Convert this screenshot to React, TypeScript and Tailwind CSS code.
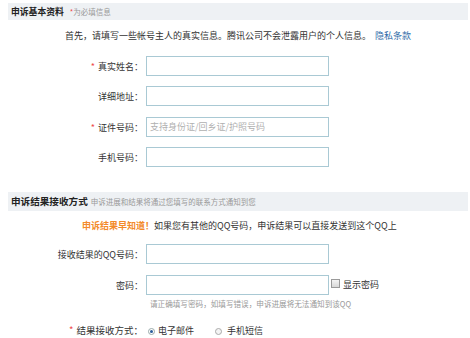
import React from "react";

const font = { fontFamily: '"Noto Sans CJK SC", "Noto Sans", sans-serif' };

function Star() {
  return <span className="text-[#ee4a4a] mr-[3px]">*</span>;
}

function Row({
  label,
  required,
  placeholder,
  mt,
  children,
}: {
  label: string;
  required?: boolean;
  placeholder?: string;
  mt: string;
  children?: React.ReactNode;
}) {
  return (
    <div className={`flex items-center h-[20px] ${mt}`}>
      <div className="w-[135px] text-right text-[9px] text-[#333] leading-none">
        {required && <Star />}
        {label}
      </div>
      <div className="ml-[3px] w-[183px] h-[20px] border border-[#a9c9d4] bg-white flex items-center pl-[3px] text-[9px] text-[#b0b0b0]">
        {placeholder}
      </div>
      {children}
    </div>
  );
}

export default function App() {
  return (
    <div className="w-[470px] h-[338px] bg-white pl-[8px] pr-[2px] pt-[3px] overflow-hidden" style={font}>
      <div className="flex items-center bg-[#eef1f4] pl-[3px] h-[17px]">
        <span className="font-bold text-[8.8px] text-[#222]">申诉基本资料</span>
        <span className="ml-[6px] text-[7.5px] text-[#999]">
          <span className="text-[#ee4a4a]">*</span>为必填信息
        </span>
      </div>

      <div className="mt-[10px] h-[12px] pl-[57px] text-[9px] leading-[12px] text-[#333] whitespace-nowrap">
        首先，请填写一些帐号主人的真实信息。腾讯公司不会泄露用户的个人信息。
        <span className="ml-[4px] text-[#2e6ba8]">隐私条款</span>
      </div>

      <Row label="真实姓名：" required mt="mt-[14px]" />
      <Row label="详细地址：" mt="mt-[10px]" />
      <Row label="证件号码：" required placeholder="支持身份证/回乡证/护照号码" mt="mt-[11px]" />
      <Row label="手机号码：" mt="mt-[10px]" />

      <div className="flex items-center bg-[#eef1f4] pl-[3px] h-[19px] mt-[25px]">
        <span className="font-bold text-[9.6px] text-[#222]">申诉结果接收方式</span>
        <span className="ml-[3px] text-[7.5px] text-[#999]">申诉进展和结果将通过您填写的联系方式通知到您</span>
      </div>

      <div className="mt-[9px] h-[12px] pl-[74px] text-[9px] leading-[12px] text-[#333] whitespace-nowrap">
        <span className="font-bold text-[#f38a2a]">申诉结果早知道！</span>
        如果您有其他的QQ号码，申诉结果可以直接发送到这个QQ上
      </div>

      <Row label="接收结果的QQ号码：" mt="mt-[12px]" />
      <Row label="密码：" mt="mt-[11px]">
        <span className="ml-[2px] w-[9px] h-[9px] border border-[#9a9a9a] bg-gradient-to-b from-[#f4f4f4] to-[#d8d8d8] -mt-[3px]" />
        <span className="ml-[3px] text-[9px] text-[#333]">显示密码</span>
      </Row>

      <div className="mt-[4px] h-[10px] pl-[142px] text-[7.6px] leading-[10px] text-[#999] whitespace-nowrap">
        请正确填写密码，如填写错误，申诉进展将无法通知到该QQ
      </div>

      <div className="mt-[16px] h-[12px] flex items-center">
        <div className="w-[135px] text-right text-[9.5px] text-[#333] leading-none">
          <Star />
          结果接收方式：
        </div>
        <span className="ml-[5px] w-[7px] h-[7px] rounded-full border border-[#9aa] bg-white flex items-center justify-center">
          <span className="w-[3px] h-[3px] rounded-full bg-[#2a5d9a]" />
        </span>
        <span className="ml-[3px] text-[9px] text-[#333]">电子邮件</span>
        <span className="ml-[21px] w-[7px] h-[7px] rounded-full border border-[#aaa] bg-[#f4f4f4]" />
        <span className="ml-[5px] text-[9px] text-[#333]">手机短信</span>
      </div>
    </div>
  );
}
